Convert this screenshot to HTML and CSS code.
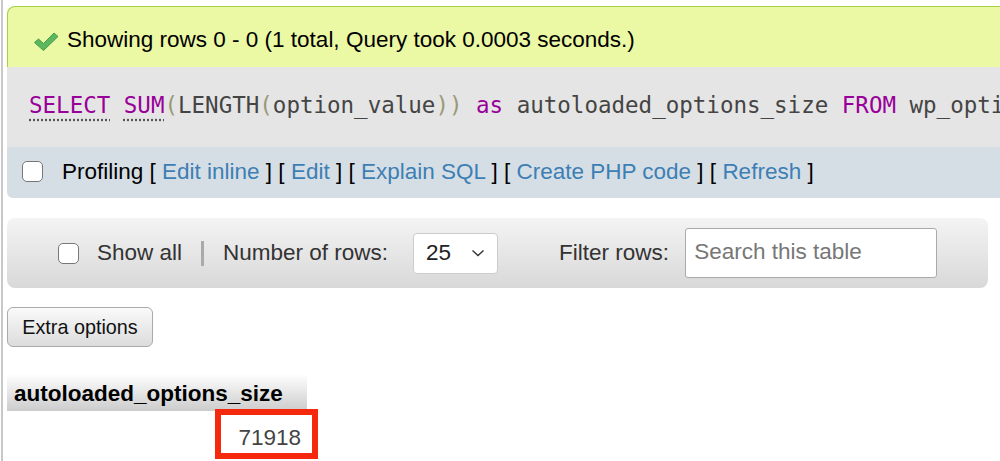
FILE: index.html
```html
<!DOCTYPE html>
<html lang="en">
<head>
  <meta charset="UTF-8" />
  <title>SQL result</title>
  <link rel="stylesheet" href="styles.css">
</head>
<body>
  <div class="page">
    <div class="result-box">
      <div class="success">
        <svg class="check" width="26" height="21" viewBox="0 0 26 21">
          <path d="M1.5 11.5 L5.5 8 L10.5 12.5 L21 2 L25 5.5 L10.5 19.5 Z" fill="#5cb85c" stroke="#4a9a4a" stroke-width="1" stroke-linejoin="round"/>
        </svg>
        Showing rows 0 - 0 (1 total, Query took 0.0003 seconds.)
      </div>
      <div class="sql">
        <span class="kw">SELECT</span> <span class="fn">SUM</span><span class="paren">(</span>LENGTH<span class="paren">(</span>option_value<span class="paren">))</span> <span class="kw plain">as</span> autoloaded_options_size <span class="kw plain">FROM</span> wp_options
      </div>
    </div>

    <div class="profiling">
      <input type="checkbox" class="box" />
      <span>Profiling [ <a href="#">Edit inline</a> ] [ <a href="#">Edit</a> ] [ <a href="#">Explain SQL</a> ] [ <a href="#">Create PHP code</a> ] [ <a href="#">Refresh</a> ]</span>
    </div>

    <div class="navbar">
      <input type="checkbox" class="box" />
      <span class="label">Show all</span>
      <span class="sep"></span>
      <span class="label">Number of rows:</span>
      <div class="select">
        <span>25</span>
        <svg width="14" height="8" viewBox="0 0 14 8"><path d="M1.5 1.5 L7 6.5 L12.5 1.5" fill="none" stroke="#333" stroke-width="1.4"/></svg>
      </div>
      <span class="label filter">Filter rows:</span>
      <div class="search">Search this table</div>
    </div>

    <button class="extra">Extra options</button>

    <table class="data">
      <tr><th>autoloaded_options_size</th></tr>
      <tr><td><span class="mark">71918</span></td></tr>
    </table>
  </div>
</body>
</html>
```

FILE: styles.css
```css
* {
  box-sizing: border-box;
}

html, body {
  margin: 0;
  padding: 0;
  background: #fff;
  overflow: hidden;
  height: 461px;
}

body {
  font-family: 'Liberation Sans', Arial, sans-serif;
  font-size: 22.5px;
  color: #000;
}

.page {
  margin-left: 1px;
  border-left: 2px solid #c8c8c8;
  padding: 6px 0 0 4px;
  height: 461px;
}

.result-box {
  width: 1100px;
}

.success {
  display: flex;
  align-items: center;
  height: 61px;
  padding: 6px 0 0 25px;
  background: #ebf8a4;
  border: 1px solid #a2d246;
  border-right: none;
  border-bottom: none;
  border-top-left-radius: 8px;
  font-size: 22.5px;
}

.check {
  margin-right: 8px;
  margin-top: 2px;
}

.sql {
  height: 80px;
  background: #e5e5e5;
  padding: 25px 0 0 22px;
  font-family: 'DejaVu Sans Mono', monospace;
  font-size: 22.5px;
  color: #444;
  white-space: nowrap;
}

.kw {
  color: #990099;
  text-decoration: underline dotted #555;
  text-underline-offset: 6px;
}

.kw.plain {
  text-decoration: none;
}

.fn {
  color: #990099;
  text-decoration: underline dotted #555;
  text-underline-offset: 6px;
}

.paren {
  color: #999977;
}

.profiling {
  display: flex;
  align-items: center;
  width: 1100px;
  height: 51px;
  background: #d5dee5;
  border-bottom-left-radius: 6px;
  padding: 0 0 2px 15px;
  font-size: 22.5px;
}

.profiling a {
  color: #3d7fb4;
  text-decoration: none;
}

.box {
  -webkit-appearance: none;
  appearance: none;
  width: 21px;
  height: 21px;
  margin: 0 19px 0 0;
  border: 1.5px solid #777;
  border-radius: 5px;
  background: #fff;
}

.navbar {
  display: flex;
  align-items: center;
  width: 981px;
  height: 70px;
  margin-top: 20px;
  padding: 0 0 0 51px;
  border-radius: 8px;
  background: linear-gradient(#f4f4f4, #d8d8d8);
  font-size: 22.5px;
  color: #333;
}

.navbar .box {
  margin-right: 18px;
}

.sep {
  width: 3px;
  height: 25px;
  background: #aaa;
  margin: 0 19px 0 19px;
}

.select {
  display: flex;
  align-items: center;
  justify-content: space-between;
  width: 85px;
  height: 41px;
  margin-left: 25px;
  padding: 0 12px 0 12px;
  background: #fff;
  border: 1px solid #ccc;
  border-radius: 4px;
  font-size: 22.5px;
  color: #222;
}

.filter {
  margin-left: 61px;
}

.search {
  width: 252px;
  height: 50px;
  margin-left: 16px;
  padding: 10px 0 0 8px;
  background: #fff;
  border: 1px solid #aaa;
  border-radius: 3px;
  font-size: 22.5px;
  color: #777;
}

.extra {
  display: block;
  margin-top: 19px;
  width: 146px;
  height: 40px;
  padding: 0;
  border: 1px solid #aaa;
  border-radius: 6px;
  background: linear-gradient(#fafafa, #dcdcdc);
  font-family: 'Liberation Sans', Arial, sans-serif;
  font-size: 19.8px;
  color: #111;
}

.data {
  margin-top: 27px;
  border-collapse: collapse;
}

.data th {
  width: 300px;
  height: 37px;
  padding: 3px 0 0 7px;
  text-align: left;
  font-size: 22.5px;
  font-weight: bold;
  background: linear-gradient(#fff, #ccc);
}

.data td {
  text-align: right;
  padding: 0;
  font-size: 22.5px;
  color: #444;
}

.mark {
  display: inline-block;
  width: 103px;
  height: 50px;
  margin-top: -2px;
  margin-right: -11px;
  padding: 10px 11px 0 0;
  border: 6px solid #f4290e;
}
```
